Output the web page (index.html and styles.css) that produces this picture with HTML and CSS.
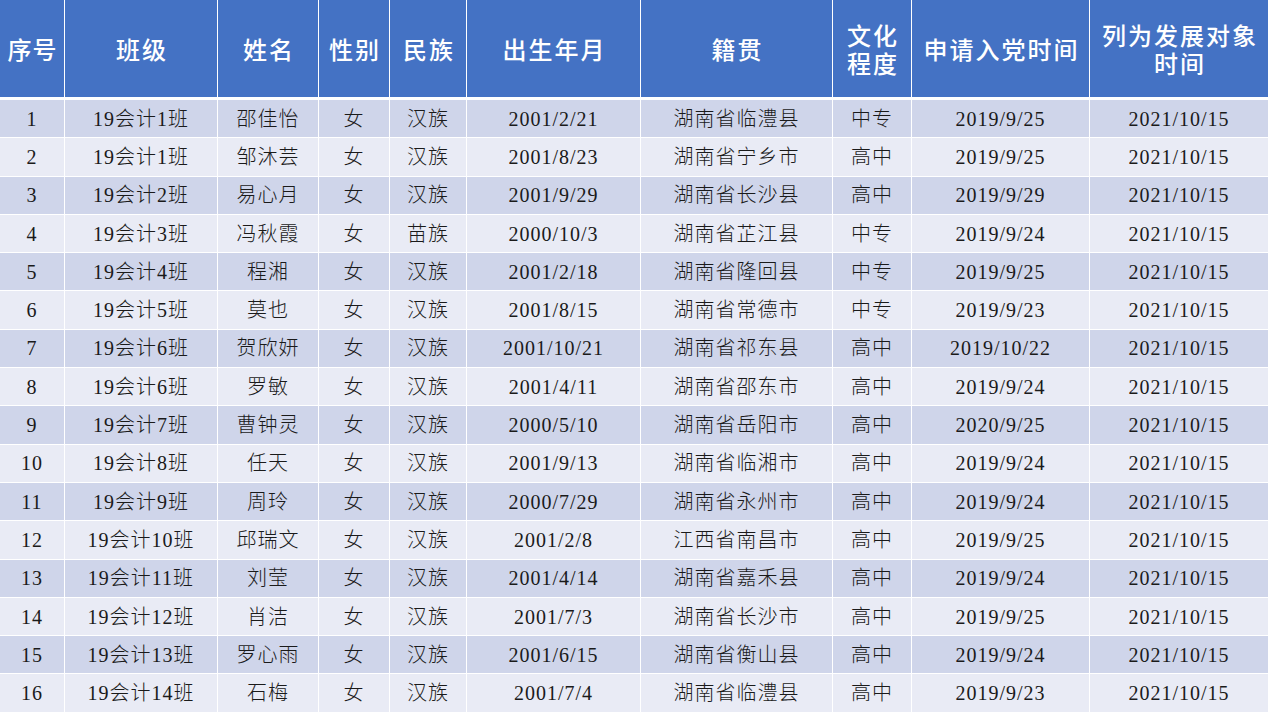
FILE: index.html
```html
<!DOCTYPE html>
<html lang="zh-CN">
<head>
<meta charset="utf-8">
<title>发展对象名单</title>
<link rel="stylesheet" href="styles.css">
</head>
<body>
<table class="roster">
  <colgroup>
    <col class="c1"><col class="c2"><col class="c3"><col class="c4"><col class="c5">
    <col class="c6"><col class="c7"><col class="c8"><col class="c9"><col class="c10">
  </colgroup>
  <thead>
    <tr>
      <th>序号</th><th>班级</th><th>姓名</th><th>性别</th><th>民族</th>
      <th>出生年月</th><th>籍贯</th><th>文化<br>程度</th><th>申请入党时间</th><th>列为发展对象<br>时间</th>
    </tr>
  </thead>
  <tbody>
    <tr><td>1</td><td>19会计1班</td><td>邵佳怡</td><td>女</td><td>汉族</td><td>2001/2/21</td><td>湖南省临澧县</td><td>中专</td><td>2019/9/25</td><td>2021/10/15</td></tr>
    <tr><td>2</td><td>19会计1班</td><td>邹沐芸</td><td>女</td><td>汉族</td><td>2001/8/23</td><td>湖南省宁乡市</td><td>高中</td><td>2019/9/25</td><td>2021/10/15</td></tr>
    <tr><td>3</td><td>19会计2班</td><td>易心月</td><td>女</td><td>汉族</td><td>2001/9/29</td><td>湖南省长沙县</td><td>高中</td><td>2019/9/29</td><td>2021/10/15</td></tr>
    <tr><td>4</td><td>19会计3班</td><td>冯秋霞</td><td>女</td><td>苗族</td><td>2000/10/3</td><td>湖南省芷江县</td><td>中专</td><td>2019/9/24</td><td>2021/10/15</td></tr>
    <tr><td>5</td><td>19会计4班</td><td>程湘</td><td>女</td><td>汉族</td><td>2001/2/18</td><td>湖南省隆回县</td><td>中专</td><td>2019/9/25</td><td>2021/10/15</td></tr>
    <tr><td>6</td><td>19会计5班</td><td>莫也</td><td>女</td><td>汉族</td><td>2001/8/15</td><td>湖南省常德市</td><td>中专</td><td>2019/9/23</td><td>2021/10/15</td></tr>
    <tr><td>7</td><td>19会计6班</td><td>贺欣妍</td><td>女</td><td>汉族</td><td>2001/10/21</td><td>湖南省祁东县</td><td>高中</td><td>2019/10/22</td><td>2021/10/15</td></tr>
    <tr><td>8</td><td>19会计6班</td><td>罗敏</td><td>女</td><td>汉族</td><td>2001/4/11</td><td>湖南省邵东市</td><td>高中</td><td>2019/9/24</td><td>2021/10/15</td></tr>
    <tr><td>9</td><td>19会计7班</td><td>曹钟灵</td><td>女</td><td>汉族</td><td>2000/5/10</td><td>湖南省岳阳市</td><td>高中</td><td>2020/9/25</td><td>2021/10/15</td></tr>
    <tr><td>10</td><td>19会计8班</td><td>任天</td><td>女</td><td>汉族</td><td>2001/9/13</td><td>湖南省临湘市</td><td>高中</td><td>2019/9/24</td><td>2021/10/15</td></tr>
    <tr><td>11</td><td>19会计9班</td><td>周玲</td><td>女</td><td>汉族</td><td>2000/7/29</td><td>湖南省永州市</td><td>高中</td><td>2019/9/24</td><td>2021/10/15</td></tr>
    <tr><td>12</td><td>19会计10班</td><td>邱瑞文</td><td>女</td><td>汉族</td><td>2001/2/8</td><td>江西省南昌市</td><td>高中</td><td>2019/9/25</td><td>2021/10/15</td></tr>
    <tr><td>13</td><td>19会计11班</td><td>刘莹</td><td>女</td><td>汉族</td><td>2001/4/14</td><td>湖南省嘉禾县</td><td>高中</td><td>2019/9/24</td><td>2021/10/15</td></tr>
    <tr><td>14</td><td>19会计12班</td><td>肖洁</td><td>女</td><td>汉族</td><td>2001/7/3</td><td>湖南省长沙市</td><td>高中</td><td>2019/9/25</td><td>2021/10/15</td></tr>
    <tr><td>15</td><td>19会计13班</td><td>罗心雨</td><td>女</td><td>汉族</td><td>2001/6/15</td><td>湖南省衡山县</td><td>高中</td><td>2019/9/24</td><td>2021/10/15</td></tr>
    <tr><td>16</td><td>19会计14班</td><td>石梅</td><td>女</td><td>汉族</td><td>2001/7/4</td><td>湖南省临澧县</td><td>高中</td><td>2019/9/23</td><td>2021/10/15</td></tr>
  </tbody>
</table>
</body>
</html>
```

FILE: styles.css
```css
html, body {
  margin: 0;
  padding: 0;
  background: #ffffff;
  overflow: hidden;
}

.roster {
  width: 1268px;
  table-layout: fixed;
  border-collapse: separate;
  border-spacing: 0;
}

.c1 { width: 65px; }
.c2 { width: 153px; }
.c3 { width: 101px; }
.c4 { width: 71px; }
.c5 { width: 77px; }
.c6 { width: 174px; }
.c7 { width: 192px; }
.c8 { width: 79px; }
.c9 { width: 178px; }
.c10 { width: 178px; }

.roster th,
.roster td {
  padding: 0;
  text-align: center;
  vertical-align: middle;
  border-right: 1px solid #ffffff;
  box-sizing: border-box;
}

.roster th:last-child,
.roster td:last-child {
  border-right: none;
}

.roster thead th {
  height: 100px;
  padding-left: 2px;
  background: #4472c4;
  color: #ffffff;
  font-family: "Noto Sans CJK SC", "Noto Sans", sans-serif;
  font-weight: 500;
  font-size: 24px;
  letter-spacing: 2px;
  line-height: 28px;
  border-bottom: 3px solid #ffffff;
}

.roster thead th:first-child {
  letter-spacing: 1px;
  padding-left: 1px;
}

.roster tbody td {
  height: 38.3px;
  border-bottom: 1px solid #ffffff;
  font-family: "Liberation Serif", "Noto Sans CJK SC", serif;
  font-weight: 300;
  font-size: 20px;
  letter-spacing: 1px;
  color: #1a1a1a;
  line-height: 24px;
}

.roster tbody tr:nth-child(odd) td {
  background: #cfd5ea;
}

.roster tbody tr:nth-child(even) td {
  background: #e9ebf5;
}
```
